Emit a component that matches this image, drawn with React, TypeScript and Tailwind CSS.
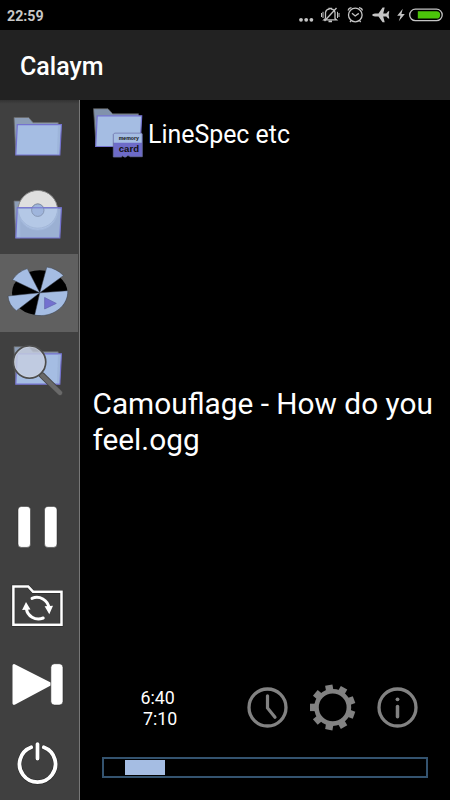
import React from "react";

const FONT = "font-[Roboto,'Noto_Sans',sans-serif]";

function Folder({ dy = 0 }: { dy?: number }) {
  return (
    <g transform={`translate(0 ${dy})`}>
      <path d="M14 117.5H28.7L33 122.6H58.2L59.7 154H15.8Z" fill="#8c9db6" stroke="#6a6a6a" strokeWidth=".8" />
      <path d="M17.3 124.6H61.4L59.8 155H15.8Z" fill="#a5bde3" stroke="#7472cf" strokeWidth="1.2" />
      <path d="M58 125.2L60.4 125.2L59.4 154H57Z" fill="#98afd3" opacity=".6" />
    </g>
  );
}

function Row({ top, active, children }: { top: number; active?: boolean; children: React.ReactNode }) {
  return (
    <button className={`block h-[78px] shrink-0 overflow-hidden ${active ? "w-[77.5px] bg-[#606060]" : "w-[78px]"}`}>
      <svg width="78" height="78" viewBox={`0 ${top} 78 78`} className="block max-w-none">{children}</svg>
    </button>
  );
}

function StatusIcons() {
  return (
    <svg width="152" height="30" viewBox="298 0 152 30" fill="none" stroke="#c4c4c4" strokeWidth="1.3">
      <g fill="#c4c4c4" stroke="none">
        <circle cx="301" cy="19.8" r="1.9" /><circle cx="306.2" cy="19.8" r="1.9" /><circle cx="311.4" cy="19.8" r="1.9" />
      </g>
      <path d="M325.5 18.5V12.5Q326 9.5 329 9.2V8.5H331.5V9.2Q334.5 9.5 335 12.5V18.5L336.5 19.8H324L325.5 18.5M328.5 21.5H332" />
      <path d="M336.5 8L324.5 21" />
      <path d="M323 11.8V18M321.5 13V17M337.5 11.8V18M339 13V17" strokeWidth="1" />
      <circle cx="355.3" cy="15" r="6.8" />
      <path d="M352 13.2L355.2 16L358.8 13.4M348.2 10.5Q348.5 8 351.5 7.6M362.4 10.5Q362 8 359 7.6M351.3 20.4L350 22M359.3 20.4L360.7 22" />
      <path d="M372 15Q372.6 13.6 375 13.5H378.5L382.6 7.6H384.7L383.2 13.5H386.3L388.2 11.3H389.3L388.6 15L389.3 18.6H388.2L386.3 16.4H383.2L384.7 22.3H382.6L378.5 16.4H375Q372.6 16.3 372 15Z" fill="#c4c4c4" stroke="none" />
      <path d="M402.8 8.8L397.2 15.8H400.6L398.8 21.3L404.8 13.9H401.4Z" fill="#c4c4c4" stroke="none" />
      <rect x="409.7" y="9.2" width="32.5" height="11.4" rx="5.7" />
      <path d="M417.8 11.3H436.5A3.5 3.5 0 0 1 436.5 18.6H417.8Z" fill="#4bc40a" stroke="none" />
    </svg>
  );
}

function Sidebar() {
  return (
    <nav className="flex w-20 shrink-0 flex-col justify-between border-r border-[#777777] bg-[#404040]">
      <div className="flex flex-col">
        <div className="-mb-px h-[77px] bg-gradient-to-b from-[#333333] from-0% to-[#404040] to-[5%]">
          <Row top={100}><Folder /></Row>
        </div>
        <Row top={176}>
          <path d="M14 201H20V238H15.8Z" fill="#8c9db6" stroke="#6a6a6a" strokeWidth=".8" />
          <circle cx="37.8" cy="210.2" r="19.8" fill="#dfdfdf" stroke="#858585" />
          <circle cx="37.8" cy="210.2" r="6.2" fill="#abb9d0" stroke="#858585" />
          <path d="M17.3 207.8H61.4L59.8 238H15.8Z" fill="#a5bde3" fillOpacity=".9" stroke="#7472cf" strokeWidth="1.2" />
          <path d="M18 208.4A19.8 19.8 0 0 0 57.6 208.4Z" fill="#b4c8e6" stroke="#9eb2d4" strokeWidth=".8" />
          <circle cx="37.8" cy="210.2" r="6.2" fill="#9fb5dc" stroke="#8292af" strokeWidth=".9" />
          <path d="M17.3 207.8H61.4" stroke="#7472cf" />
        </Row>
        <Row top={254} active>
          <ellipse cx="39.8" cy="292.8" rx="27.8" ry="22.5" fill="#000" />
          <g fill="#a5bde3" stroke="#3a414d" strokeWidth=".5">
            <path d="M39.8 292.8L12.5 279.7Q18 271.5 27.3 268.6Z" />
            <path d="M39.8 292.8L46.8 267Q56.5 268.5 63.5 275.5Z" />
            <path d="M39.8 292.8L67.8 290.7C68.5 305.5 53 318.3 34.7 315.1Z" />
            <path d="M39.8 292.8L8 296Q8.6 305 16.4 310.7Z" />
          </g>
          <path d="M44.6 297.5L56.3 303.4L44.6 309Z" fill="#7370cf" stroke="#6266ae" strokeWidth=".7" />
        </Row>
        <Row top={332}>
          <Folder dy={229.2} />
          <path d="M42 375.3L60 392.9" stroke="#444" strokeWidth="6.2" strokeLinecap="round" />
          <path d="M42 375.3L60 392.9" stroke="#696969" strokeWidth="4.5" strokeLinecap="round" />
          <circle cx="29.5" cy="362" r="16.2" fill="#c7cee0" fillOpacity=".8" stroke="#4d4d4d" strokeWidth="1.8" />
          <circle cx="29.5" cy="362" r="15" fill="none" stroke="#d8dce4" strokeOpacity=".5" strokeWidth=".8" />
        </Row>
      </div>
      <div className="flex flex-col">
        <Row top={488}>
          <g fill="#fff" stroke="#282828" strokeWidth=".5">
            <rect x="18" y="506.4" width="12.5" height="41" rx="3.5" />
            <rect x="44.5" y="506.4" width="12.5" height="41" rx="3.5" />
          </g>
        </Row>
        <Row top={566}>
          <path d="M13.4 586.4H28.2L33 591.7H61.5V624.8H13.4Z" fill="none" stroke="#222" strokeWidth="3.4" />
          <path d="M13.4 586.4H28.2L33 591.7H61.5V624.8H13.4Z" fill="none" stroke="#fff" strokeWidth="2.5" />
          <g fill="none" stroke="#fff" strokeWidth="3" strokeLinecap="round">
            <path d="M32 598.4C39.5 595.2 48 600 48.9 608" />
            <path d="M43.2 618C35.2 621 27.2 616 26.4 608.5" />
          </g>
          <path d="M44.6 606.3L53 605.8L49.3 614.2ZM22.1 610.1L26 602L30.5 609.4Z" fill="#fff" />
        </Row>
        <Row top={644}>
          <path d="M14 665.5L50.5 684L14 703.3Z" fill="#fff" stroke="#fff" strokeWidth="3" strokeLinejoin="round" />
          <rect x="50.8" y="663.7" width="12.2" height="41.4" rx="3.8" fill="#fff" stroke="#282828" strokeWidth=".6" />
        </Row>
        <Row top={722}>
          <g fill="none" strokeLinecap="round">
            <path d="M31.2 747.3A18 18 0 1 0 43.8 747.3M37.5 744.1V758.5" stroke="#292929" strokeWidth="4.8" />
            <path d="M31.2 747.3A18 18 0 1 0 43.8 747.3M37.5 744.1V758.5" stroke="#fff" strokeWidth="3.8" />
          </g>
        </Row>
      </div>
    </nav>
  );
}

function Tools() {
  const teeth = [0, 40, 80, 120, 160, 200, 240, 280, 320];
  return (
    <svg width="180" height="50" viewBox="243 682 180 50" fill="none" stroke="#828282" className="block">
      <circle cx="267.5" cy="707.5" r="18.5" strokeWidth="3.3" />
      <path d="M267.5 695.8V708L275 717.3" strokeWidth="3.2" strokeLinecap="round" />
      <circle cx="332.7" cy="707.4" r="16.2" strokeWidth="4.6" />
      <g fill="#828282" stroke="none">
        {teeth.map((a) => <path key={a} d="M310 703.7H317V711.1H310Z" transform={`rotate(${a} 332.7 707.4)`} />)}
      </g>
      <circle cx="397.5" cy="707.5" r="18.5" strokeWidth="3.3" />
      <path d="M397.5 706.5V716.8" strokeWidth="3.5" strokeLinecap="round" />
      <circle cx="397.5" cy="699.3" r="1.9" fill="#828282" stroke="none" />
    </svg>
  );
}

export default function App() {
  return (
    <div className={`flex h-[800px] w-[450px] flex-col overflow-hidden bg-black text-white ${FONT}`}>
      <div className="flex h-[30px] shrink-0 items-center justify-between pl-[7px]">
        <span className="pt-[2px] text-[14.2px] leading-none font-bold text-[#c8c8c8]">22:59</span>
        <StatusIcons />
      </div>
      <header className="flex h-[70px] shrink-0 items-center bg-[#222222] pl-5">
        <h1 className="pt-[3px] text-[25px] leading-[30px] font-medium">Calaym</h1>
      </header>
      <div className="flex min-h-0 flex-1">
        <Sidebar />
        <main className="flex flex-1 flex-col">
          <div className="flex h-[66px] items-center pl-3">
            <svg width="56" height="60" viewBox="92 103 56 60" className="block">
              <path d="M93.5 108.7H108L112.7 113.8H138.5L139.7 145H96Z" fill="#8192ac" stroke="#555" strokeWidth=".8" />
              <path d="M97.2 115.8H141.7L140 146.5H95.7Z" fill="#a5bde3" stroke="#7472cf" strokeWidth="1.2" />
              <path d="M114.5 133.2H141.5L142.3 134V156.7H130.2L129 155.8H127.5L126 157H124L122.8 155.8L121.3 157H113.3V134.4Z" fill="#6d6bc8" stroke="#666c99" strokeWidth=".8" />
              <path d="M114.5 133.6H141.7V142.8H113.7V134.4Z" fill="#a5bde3" />
              <text x="118.7" y="139.6" textLength="20.2" lengthAdjust="spacingAndGlyphs" fontFamily="Liberation Sans" fontWeight="700" fontSize="5.5" fill="#111">memory</text>
              <text x="118.8" y="152" textLength="20.2" lengthAdjust="spacingAndGlyphs" fontFamily="Liberation Sans" fontWeight="700" fontSize="9.5" fill="#111">card</text>
            </svg>
            <span className="pt-[4px] text-[24.9px] leading-8 whitespace-nowrap">LineSpec etc</span>
          </div>
          <div className="mt-[220px] pl-[12.5px] text-[29.8px] leading-[36px] whitespace-nowrap">
            <p>Camouflage - How do you</p>
            <p>feel.ogg</p>
          </div>
          <div className="mt-auto flex h-[50px] items-center justify-between pr-[27px] pl-[60.5px]">
            <div className="pt-[2px] text-[17.8px] leading-[21px]">
              <p>6:40</p>
              <p className="pl-[2.5px]">7:10</p>
            </div>
            <Tools />
          </div>
          <div className="mt-[25px] mr-[22px] mb-[22px] ml-[22px] h-[21px] shrink-0 border-2 border-[#34536f] pt-px pl-[21px]">
            <div className="h-[15px] w-10 bg-[#a5bde3]" />
          </div>
        </main>
      </div>
    </div>
  );
}
